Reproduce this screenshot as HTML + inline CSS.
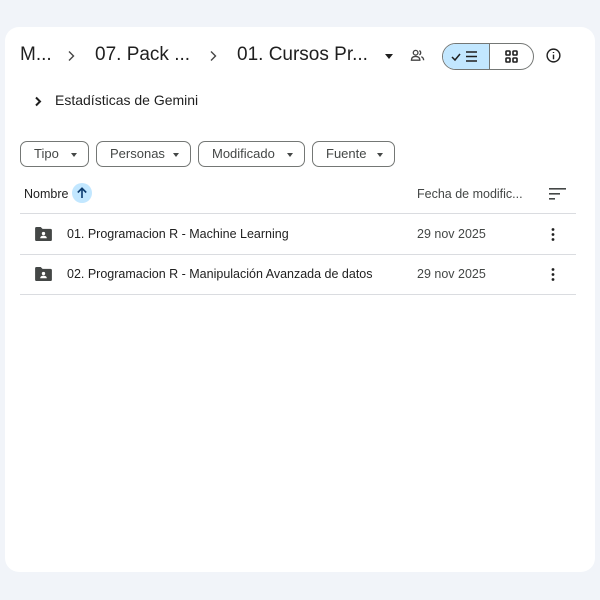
<!DOCTYPE html><html><head><style>
body{margin:0;width:600px;height:600px;background:#f1f4f9;font-family:"Liberation Sans",sans-serif;color:#1f1f1f;position:relative;overflow:hidden}
.card{position:absolute;left:5px;top:27px;width:590px;height:545px;background:#fff;border-radius:14px}
.a{position:absolute;white-space:nowrap}
.f{position:absolute;top:141px;height:24px;border:1px solid #747775;border-radius:7px;font-size:13px;color:#444746;line-height:24px;padding-left:13px;box-sizing:content-box}
.f:after{content:"";position:absolute;right:11px;top:11px;border:3.5px solid transparent;border-top:4px solid #444746}
.ln{position:absolute;left:20px;width:556px;height:1px;background:#dadce0}
.bc{font-size:19px;top:44px;color:#1f1f1f}
</style></head><body><div class="card"></div>
<div class="a bc" style="left:20px">M...</div>
<svg class="a" style="left:67px;top:50px" width="8" height="12" viewBox="0 0 8 12" fill="none" stroke="#444" stroke-width="1.4"><path d="M2 1.5l4.5 4.5L2 10.5"/></svg>
<div class="a bc" style="left:95px">07. Pack ...</div>
<svg class="a" style="left:209px;top:50px" width="8" height="12" viewBox="0 0 8 12" fill="none" stroke="#444" stroke-width="1.4"><path d="M2 1.5l4.5 4.5L2 10.5"/></svg>
<div class="a bc" style="left:237px">01. Cursos Pr...</div>
<div class="a" style="left:385px;top:54px;border:4px solid transparent;border-top:5px solid #1f1f1f"></div>
<svg class="a" style="left:410px;top:48px" width="15" height="15" viewBox="0 0 16 16" fill="none" stroke="#444" stroke-width="1.4"><circle cx="6" cy="5" r="2.5"/><path d="M1.5 13c0-3 2-4 4.5-4s4.5 1 4.5 4zM10 2.8a2.5 2.5 0 010 4.5M12 9.3c1.5.5 2.5 1.5 2.5 3.7"/></svg>
<div class="a" style="left:442px;top:43px;width:90px;height:25px;border:1px solid #747775;border-radius:14px;overflow:hidden">
<div style="position:absolute;left:0;top:0;width:46px;height:25px;background:#c2e7ff;border-right:1px solid #747775"></div>
<svg style="position:absolute;left:8px;top:6px" width="30" height="13" viewBox="0 0 30 13" fill="none" stroke="#1f1f1f" stroke-width="1.5"><path d="M1 7l3 3 5-6"/><path d="M15 2h11M15 6.5h11M15 11h11"/></svg>
<svg style="position:absolute;left:62px;top:6px" width="13" height="13" viewBox="0 0 13 13" fill="none" stroke="#1f1f1f" stroke-width="1.6"><rect x="1" y="1" width="4" height="4" rx="0.8"/><rect x="8" y="1" width="4" height="4" rx="0.8"/><rect x="1" y="8" width="4" height="4" rx="0.8"/><rect x="8" y="8" width="4" height="4" rx="0.8"/></svg></div>
<svg class="a" style="left:546px;top:48px" width="15" height="15" viewBox="0 0 16 16" fill="none" stroke="#1f1f1f" stroke-width="1.5"><circle cx="8" cy="8" r="6.8"/><path d="M8 7v5M8 4.3v1"/></svg>
<svg class="a" style="left:34px;top:96px" width="8" height="11" viewBox="0 0 8 11" fill="none" stroke="#1f1f1f" stroke-width="2"><path d="M2 1.5l4 4-4 4"/></svg>
<div class="a" style="left:55px;top:92px;font-size:14px">Estadísticas de Gemini</div>
<div class="f" style="left:20px;width:54px">Tipo</div>
<div class="f" style="left:96px;width:80px">Personas</div>
<div class="f" style="left:198px;width:92px">Modificado</div>
<div class="f" style="left:312px;width:68px">Fuente</div>
<div class="a" style="left:24px;top:187px;font-size:12.5px">Nombre</div>
<div class="a" style="left:72px;top:183px;width:20px;height:20px;border-radius:50%;background:#c2e7ff"></div>
<svg class="a" style="left:76px;top:187px" width="12" height="12" viewBox="0 0 12 12" fill="none" stroke="#0b3a6e" stroke-width="1.6"><path d="M6 11V1.5M1.8 5.5L6 1.3l4.2 4.2"/></svg>
<div class="a" style="left:417px;top:187px;font-size:12.5px;color:#444746">Fecha de modific...</div>
<svg class="a" style="left:549px;top:188px" width="17" height="12" viewBox="0 0 17 12" fill="#444746"><rect x="0" y="0" width="17" height="1.6"/><rect x="0" y="5" width="11" height="1.6"/><rect x="0" y="10" width="6" height="1.6"/></svg>
<div class="ln" style="top:213px"></div>
<div class="ln" style="top:254px"></div>
<div class="ln" style="top:294px"></div>
<svg class="a" style="left:35px;top:227px" width="17" height="14" viewBox="0 0 18 15"><path d="M0 1.5Q0 0 1.5 0H6l2 2h8.5Q18 2 18 3.5v10Q18 15 16.5 15h-15Q0 15 0 13.5z" fill="#444746"/><circle cx="9" cy="7" r="1.8" fill="#fff"/><path d="M5.5 12c0-2 1.6-2.6 3.5-2.6s3.5.6 3.5 2.6z" fill="#fff"/></svg>
<svg class="a" style="left:35px;top:267px" width="17" height="14" viewBox="0 0 18 15"><path d="M0 1.5Q0 0 1.5 0H6l2 2h8.5Q18 2 18 3.5v10Q18 15 16.5 15h-15Q0 15 0 13.5z" fill="#444746"/><circle cx="9" cy="7" r="1.8" fill="#fff"/><path d="M5.5 12c0-2 1.6-2.6 3.5-2.6s3.5.6 3.5 2.6z" fill="#fff"/></svg>
<div class="a" style="left:67px;top:227px;font-size:12.5px">01. Programacion R - Machine Learning</div>
<div class="a" style="left:67px;top:267px;font-size:12.5px">02. Programacion R - Manipulación Avanzada de datos</div>
<div class="a" style="left:417px;top:227px;font-size:12.5px;color:#444746">29 nov 2025</div>
<div class="a" style="left:417px;top:267px;font-size:12.5px;color:#444746">29 nov 2025</div>
<svg class="a" style="left:551px;top:228px" width="4" height="13" viewBox="0 0 4 13" fill="#1f1f1f"><circle cx="2" cy="1.5" r="1.4"/><circle cx="2" cy="6.5" r="1.4"/><circle cx="2" cy="11.5" r="1.4"/></svg>
<svg class="a" style="left:551px;top:268px" width="4" height="13" viewBox="0 0 4 13" fill="#1f1f1f"><circle cx="2" cy="1.5" r="1.4"/><circle cx="2" cy="6.5" r="1.4"/><circle cx="2" cy="11.5" r="1.4"/></svg>
</body></html>
